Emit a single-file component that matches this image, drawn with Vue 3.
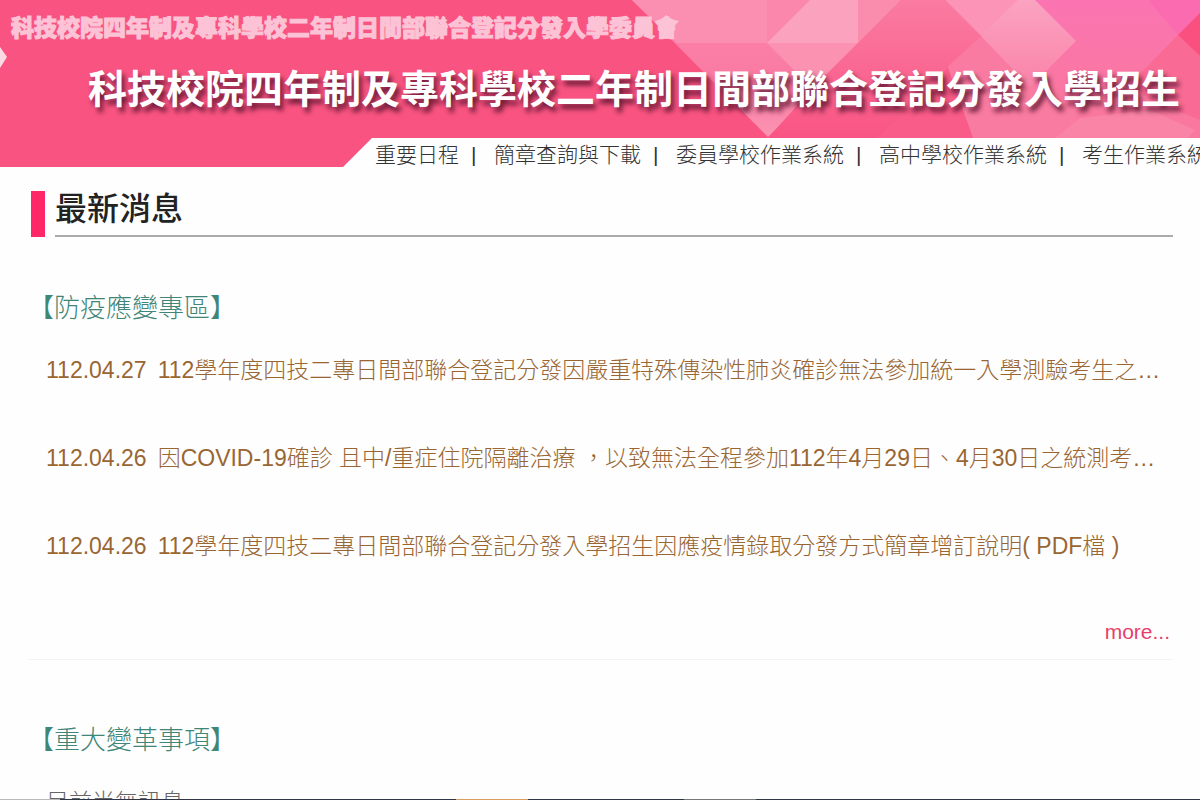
<script setup>
const navItems = ['重要日程', '簡章查詢與下載', '委員學校作業系統', '高中學校作業系統', '考生作業系統']

const news = [
  { date: '112.04.27', title: '112學年度四技二專日間部聯合登記分發因嚴重特殊傳染性肺炎確診無法參加統一入學測驗考生之…' },
  { date: '112.04.26', title: '因COVID-19確診 且中/重症住院隔離治療 ，以致無法全程參加112年4月29日、4月30日之統測考…' },
  { date: '112.04.26', title: '112學年度四技二專日間部聯合登記分發入學招生因應疫情錄取分發方式簡章增訂說明( PDF檔 )' },
]
</script>

<template>
  <div class="page">
    <header class="banner">
      <svg class="pattern" viewBox="0 0 1200 138" preserveAspectRatio="none" aria-hidden="true">
        <defs>
          <linearGradient id="fold" x1="0" y1="0" x2="0" y2="1">
            <stop offset="0" stop-color="#fa7ba1" />
            <stop offset="1" stop-color="#f95584" />
          </linearGradient>
          <linearGradient id="wedge" x1="0" y1="0" x2="0" y2="1">
            <stop offset="0" stop-color="#fa82a8" />
            <stop offset="0.6" stop-color="#fa7ba3" />
            <stop offset="1" stop-color="#fb94b3" />
          </linearGradient>
          <linearGradient id="magenta" x1="0" y1="0" x2="0" y2="1">
            <stop offset="0" stop-color="#fb74b2" />
            <stop offset="1" stop-color="#f9789c" />
          </linearGradient>
          <linearGradient id="diamond" x1="0" y1="0" x2="0" y2="1">
            <stop offset="0" stop-color="#fba3c2" />
            <stop offset="1" stop-color="#fa83a8" />
          </linearGradient>
        </defs>
        <polygon points="632,0 906,0 768,137" fill="url(#wedge)" />
        <polygon points="632,0 767,0 767,43 677,43" fill="#fb8fb1" />
        <polygon points="767,0 810,0 767,43" fill="#fb88ac" />
        <polygon points="810,0 858,0 858,43 767,43" fill="#fba3be" />
        <polygon points="858,0 901,0 858,43" fill="#fa8cad" />
        <polygon points="767,43 858,43 812,88" fill="#fb92b1" />
        <polygon points="901,0 945,0 981,36 877,138 768,138 812,89" fill="url(#fold)" />
        <polygon points="981,36 1200,36 1200,138 973,138 948,66" fill="#fa789f" />
        <polygon points="981,36 948,68 973,138 1076,138 1076,60" fill="#fa7ba1" />
        <polygon points="948,68 877,138 973,138 955,90" fill="#f95c88" />
        <polygon points="1035,0 1200,0 1200,15 1100,115 1035,100" fill="url(#magenta)" />
        <polygon points="1148,0 1200,0 1200,14 1178,35" fill="#fb6bb0" />
        <polygon points="1178,35 1200,56 1200,120 1150,100 1130,84" fill="#f96b95" />
        <polygon points="945,0 1025,0 981,36" fill="#fb94b6" />
        <polygon points="1018,0 1035,0 1076,41 1030,87 981,36" fill="url(#diamond)" />
        <polygon points="1200,13 1178,35 1200,56" fill="#f9507f" />
        <polygon points="1055,138 1080,118 1150,110 1195,130 1188,138" fill="#fa84a6" />
        <polygon points="0,47 7,57 0,68" fill="#fbdbe3" />
      </svg>
      <p class="committee">科技校院四年制及專科學校二年制日間部聯合登記分發入學委員會</p>
      <h1 class="title">科技校院四年制及專科學校二年制日間部聯合登記分發入學招生</h1>
      <nav class="nav">
        <a v-for="item in navItems" :key="item" class="nav-link" href="#">{{ item }}</a>
      </nav>
    </header>

    <main class="content">
      <div class="section-head">
        <span class="marker"></span>
        <h2 class="section-title">最新消息</h2>
      </div>

      <section class="group">
        <h3 class="group-title">【防疫應變專區】</h3>
        <ul class="news">
          <li v-for="item in news" :key="item.title">
            <a class="news-link" href="#"><span>{{ item.date }}</span><span class="news-title">{{ item.title }}</span></a>
          </li>
        </ul>
        <div class="more-row"><a class="more" href="#">more...</a></div>
      </section>

      <section class="group later">
        <h3 class="group-title">【重大變革事項】</h3>
        <p class="empty">目前尚無訊息</p>
      </section>
    </main>
    <div class="dock"><i class="pale"></i><i class="active"></i><i class="grey"></i></div>
  </div>
</template>

<style>
body {
  margin: 0;
  overflow: hidden;
}
</style>

<style scoped>
.page {
  position: relative;
  height: 100vh;
  overflow: hidden;
  background: #fefefe;
  font-family: "Liberation Sans", "Noto Sans CJK TC", sans-serif;
}
.banner {
  position: relative;
  padding-top: 6px;
  background: #f95481;
  overflow: hidden;
}
.pattern {
  position: absolute;
  top: 0;
  left: 0;
  width: 100%;
  height: 138px;
}
.committee,
.title {
  position: relative;
  margin: 0;
  font-family: "Noto Sans CJK TC", sans-serif;
  white-space: nowrap;
}
.committee {
  padding-left: 11px;
  color: #fcc3d6;
  font-size: 23px;
  font-weight: 900;
  line-height: 40px;
  -webkit-text-stroke: 1px #fcc3d6;
}
.title {
  padding-left: 88px;
  color: #fff;
  font-size: 39px;
  font-weight: 700;
  line-height: 80px;
  text-shadow: 3px 5px 5px rgba(70, 10, 35, 0.8);
}
.nav {
  position: relative;
  display: flex;
  margin: 12px 0 0 343px;
  padding-left: 32px;
  height: 29px;
  background: #fefefe;
  clip-path: polygon(29px 0, 100% 0, 100% 100%, 0 100%);
}
.nav-link {
  flex: none;
  color: #333;
  font-size: 21px;
  font-weight: 300;
  line-height: 34px;
  text-decoration: none;
}
.nav-link + .nav-link::before {
  content: "|";
  display: inline-block;
  width: 5px;
  margin: 0 18px 0 12px;
}
.content {
  padding: 24px 27px 0 28px;
}
.section-head {
  display: flex;
  gap: 10px;
  padding-left: 3px;
}
.marker {
  width: 14px;
  height: 46px;
  background: #ff2768;
}
.section-title {
  flex: 1;
  height: 44px;
  margin: 0;
  border-bottom: 2px solid #aaa;
  color: #222;
  font-size: 32px;
  font-weight: 500;
  line-height: 36px;
}
.group {
  padding-top: 53px;
}
.group.later {
  padding-top: 62px;
}
.group-title {
  margin: 0;
  color: #408678;
  font-size: 26px;
  font-weight: 300;
  line-height: 36px;
}
.news {
  margin: 0;
  padding: 0 0 0 18px;
  list-style: none;
}
.news li {
  height: 88px;
}
.news-link {
  display: flex;
  gap: 11px;
  padding-top: 26px;
  color: #996633;
  font-size: 23px;
  font-weight: 300;
  line-height: 36px;
  text-decoration: none;
  white-space: nowrap;
}
.news-title {
  white-space: pre;
}
.more-row {
  padding: 27px 3px 12px 0;
  border-bottom: 1px solid #f3f3f5;
  text-align: right;
}
.more {
  color: #e83e6c;
  font-size: 21px;
  line-height: 30px;
  text-decoration: none;
}
.empty {
  margin: 0;
  padding: 26px 0 0 18px;
  color: #666;
  font-size: 23px;
  font-weight: 300;
  line-height: 36px;
}
.dock {
  position: absolute;
  right: 0;
  bottom: 0;
  left: 0;
  display: flex;
  height: 1px;
  background: #303645;
}
.pale {
  width: 5%;
  background: #bbb;
}
.active {
  width: 6%;
  margin-left: 33%;
  background: #dc9b62;
}
.grey {
  width: 6%;
  margin-left: 13%;
  background: #777;
}
</style>
